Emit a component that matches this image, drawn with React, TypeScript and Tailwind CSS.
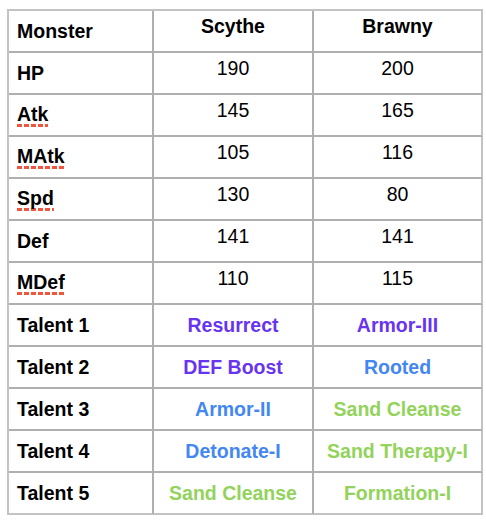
import clsx from "clsx";

type Cell = { text: string; color?: string };

type Row = {
	label: string;
	spell?: boolean;
	talent?: boolean;
	cells: [Cell, Cell];
};

const purple = "text-[#6934ef]";
const blue = "text-[#4387f2]";
const green = "text-[#93d35c]";

const rows: Row[] = [
	{ label: "HP", cells: [{ text: "190" }, { text: "200" }] },
	{ label: "Atk", spell: true, cells: [{ text: "145" }, { text: "165" }] },
	{ label: "MAtk", spell: true, cells: [{ text: "105" }, { text: "116" }] },
	{ label: "Spd", spell: true, cells: [{ text: "130" }, { text: "80" }] },
	{ label: "Def", cells: [{ text: "141" }, { text: "141" }] },
	{ label: "MDef", spell: true, cells: [{ text: "110" }, { text: "115" }] },
	{
		label: "Talent 1",
		talent: true,
		cells: [
			{ text: "Resurrect", color: purple },
			{ text: "Armor-III", color: purple },
		],
	},
	{
		label: "Talent 2",
		talent: true,
		cells: [
			{ text: "DEF Boost", color: purple },
			{ text: "Rooted", color: blue },
		],
	},
	{
		label: "Talent 3",
		talent: true,
		cells: [
			{ text: "Armor-II", color: blue },
			{ text: "Sand Cleanse", color: green },
		],
	},
	{
		label: "Talent 4",
		talent: true,
		cells: [
			{ text: "Detonate-I", color: blue },
			{ text: "Sand Therapy-I", color: green },
		],
	},
	{
		label: "Talent 5",
		talent: true,
		cells: [
			{ text: "Sand Cleanse", color: green },
			{ text: "Formation-I", color: green },
		],
	},
];

// spell-check squiggle under a word
const Misspelled = ({ children }: { children: string }) => (
	<span className="pb-px bg-[image:repeating-linear-gradient(90deg,#f1553e_0_5px,transparent_5px_7px)] bg-no-repeat bg-bottom bg-[length:100%_3px]">
		{children}
	</span>
);

const cellBase = "border-r-2 border-b-2 border-[#afafaf] h-[42px] flex";

export default function App() {
	return (
		<div className="w-[486px] h-[520px] bg-white pt-[9px] pl-[7px] font-['Liberation_Sans',Arial,sans-serif] text-[19.5px] text-black leading-[1.15]">
			<div className="grid grid-cols-[145px_160px_169px] w-[476px] border-l-2 border-t-2 border-[#c3c3c3]">
				<div className={clsx(cellBase, "items-center pl-2 font-bold")}>Monster</div>
				<div className={clsx(cellBase, "justify-center pt-1 font-bold")}>Scythe</div>
				<div className={clsx(cellBase, "justify-center pt-1 font-bold border-r-[#c3c3c3]")}>Brawny</div>
				{rows.map((row, i) => {
					const last = i === rows.length - 1;
					return [
						<div
							key={row.label}
							className={clsx(cellBase, "items-center pl-2 font-bold", last && "border-b-[#c3c3c3]")}
						>
							{row.spell ? <Misspelled>{row.label}</Misspelled> : row.label}
						</div>,
						...row.cells.map((c, j) => (
							<div
								key={row.label + j}
								className={clsx(
									cellBase,
									"justify-center",
									row.talent ? "items-center font-bold" : "pt-1",
									c.color,
									j === 1 && "border-r-[#c3c3c3]",
									last && "border-b-[#c3c3c3]"
								)}
							>
								{c.text}
							</div>
						)),
					];
				})}
			</div>
		</div>
	);
}
